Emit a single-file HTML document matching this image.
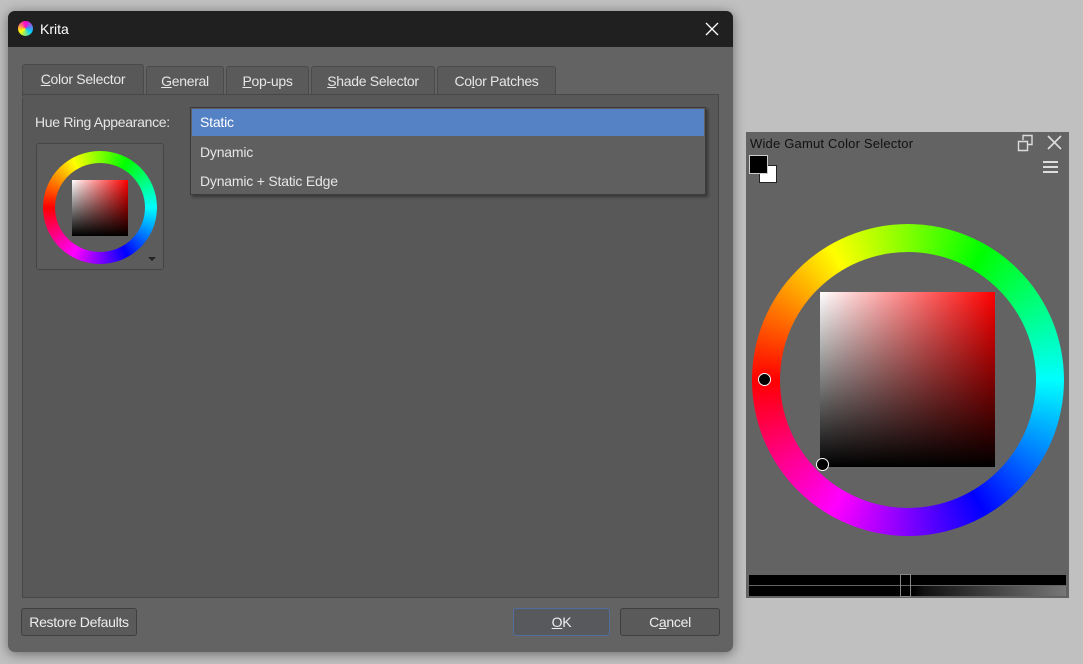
<!DOCTYPE html>
<html><head><style>
body{margin:0;width:1083px;height:664px;background:#c0c0c0;font-family:"Liberation Sans",sans-serif;position:relative;overflow:hidden}
.a{position:absolute}
.dlg{left:8px;top:11px;width:725px;height:641px;background:#636363;border-radius:7px;box-shadow:0 2px 12px rgba(0,0,0,.45);overflow:hidden}
.tb{left:0;top:0;width:725px;height:36px;background:#202020;color:#fff;font-size:14px}
.tab{top:66px;height:28px;border:1px solid #4a4a4a;border-bottom:none;background:#5a5a5a;color:#e6e6e6;font-size:14px;letter-spacing:-0.3px;text-align:center;line-height:28px;border-radius:3px 3px 0 0;box-sizing:border-box}
.pane{left:22px;top:94px;width:697px;height:504px;background:#585858;border:1px solid #474747;box-sizing:border-box}
.btn{height:28px;border:1px solid #3f3f3f;background:#5a5a5a;color:#eee;font-size:14px;letter-spacing:-0.3px;text-align:center;line-height:26px;border-radius:3px;box-sizing:border-box}
u{text-decoration:underline}
.ring{border-radius:50%;background:conic-gradient(#80ff00,#00ff00 30deg,#00ffff 90deg,#0000ff 150deg,#ff00ff 210deg,#ff0000 270deg,#ffff00 330deg,#80ff00 360deg)}
.sq{background:linear-gradient(to bottom,rgba(0,0,0,0),#000),linear-gradient(to right,#fff,#f00)}
</style></head><body>
<div class="a dlg">
 <div class="a tb">
  <div class="a" style="left:10px;top:10px;width:15px;height:15px;border-radius:50%;background:conic-gradient(#f0c,#0cf,#ff0,#f0c)"></div>
  <div class="a" style="left:32px;top:10px">Krita</div>
  <svg class="a" style="left:697px;top:11px" width="14" height="14"><path d="M1 1L13 13M13 1L1 13" stroke="#fff" stroke-width="1.3"/></svg>
 </div>
</div>
<div class="a tab" style="left:22px;top:64px;width:122px;height:31px;background:#585858;line-height:28px"><u>C</u>olor Selector</div>
<div class="a tab" style="left:146px;width:78px"><u>G</u>eneral</div>
<div class="a tab" style="left:226px;width:83px"><u>P</u>op-ups</div>
<div class="a tab" style="left:311px;width:124px"><u>S</u>hade Selector</div>
<div class="a tab" style="left:437px;width:119px">Co<u>l</u>or Patches</div>
<div class="a pane"></div>
<div class="a" style="left:22px;top:96px;width:122px;height:2px;background:#585858"></div>
<div class="a" style="left:35px;top:114px;color:#e6e6e6;font-size:14px;letter-spacing:-0.3px">Hue Ring Appearance:</div>
<div class="a" style="left:36px;top:143px;width:128px;height:127px;border:1px solid #454545;border-radius:3px;background:#5c5c5c;box-sizing:border-box"></div>
<div class="a ring" style="left:43px;top:151px;width:114px;height:113px"></div>
<div class="a" style="left:55px;top:163px;width:90px;height:89px;border-radius:50%;background:#5c5c5c"></div>
<div class="a sq" style="left:72px;top:180px;width:56px;height:56px"></div>
<div class="a" style="left:148px;top:257px;border:4px solid transparent;border-top:4px solid #222"></div>
<div class="a" style="left:190px;top:107px;width:516px;height:88px;background:#5f5f5f;border:1px solid #3c3c3c;box-shadow:2px 2px 3px rgba(0,0,0,.4);box-sizing:border-box;color:#e6e6e6;font-size:14px;letter-spacing:-0.2px">
 <div class="a" style="left:1px;top:1px;width:512px;height:27px;background:#5581c5;color:#fff;line-height:27px;padding-left:8px;box-sizing:border-box">Static</div>
 <div class="a" style="left:9px;top:36px">Dynamic</div>
 <div class="a" style="left:9px;top:65px">Dynamic + Static Edge</div>
</div>
<div class="a btn" style="left:21px;top:608px;width:116px">Restore Defaults</div>
<div class="a btn" style="left:513px;top:608px;width:97px;border-color:#4f6e9c;background:#57595d"><u>O</u>K</div>
<div class="a btn" style="left:620px;top:608px;width:100px">C<u>a</u>ncel</div>

<div class="a" style="left:746px;top:132px;width:323px;height:466px;background:#636363"></div>
<div class="a" style="left:750px;top:136px;font-size:13px;color:#111;letter-spacing:0.2px">Wide Gamut Color Selector</div>
<svg class="a" style="left:1017px;top:134px" width="20" height="18"><path d="M1.5 7.5h9v9h-9z M6 6V1.5h9v9h-4" fill="none" stroke="#ddd" stroke-width="1.4"/></svg>
<svg class="a" style="left:1047px;top:135px" width="15" height="15"><path d="M1 1L14 14M14 1L1 14" stroke="#ddd" stroke-width="1.6"/></svg>
<div class="a" style="left:1043px;top:161px;width:15px;height:2px;background:#ddd;box-shadow:0 5px 0 #ddd,0 10px 0 #ddd"></div>
<div class="a" style="left:759px;top:165px;width:16px;height:16px;background:#fff;border:1px solid #222"></div>
<div class="a" style="left:749px;top:155px;width:17px;height:17px;background:#000;border:1px solid #ccc"></div>
<div class="a ring" style="left:752px;top:224px;width:312px;height:312px"></div>
<div class="a" style="left:780px;top:252px;width:256px;height:256px;border-radius:50%;background:#636363"></div>
<div class="a sq" style="left:820px;top:292px;width:175px;height:175px"></div>
<div class="a" style="left:758px;top:373px;width:11px;height:11px;border-radius:50%;background:#000;border:1.5px solid #fff"></div>
<div class="a" style="left:816px;top:458px;width:11px;height:11px;border-radius:50%;background:#000;border:1.5px solid #fff"></div>
<div class="a" style="left:749px;top:575px;width:317px;height:10px;background:#000"></div>
<div class="a" style="left:749px;top:586px;width:317px;height:10px;background:linear-gradient(to right,#000 52%,#111 55%,#777 100%)"></div>
<div class="a" style="left:900px;top:574px;width:11px;height:23px;border:1px solid #888;box-sizing:border-box"></div>
</body></html>
